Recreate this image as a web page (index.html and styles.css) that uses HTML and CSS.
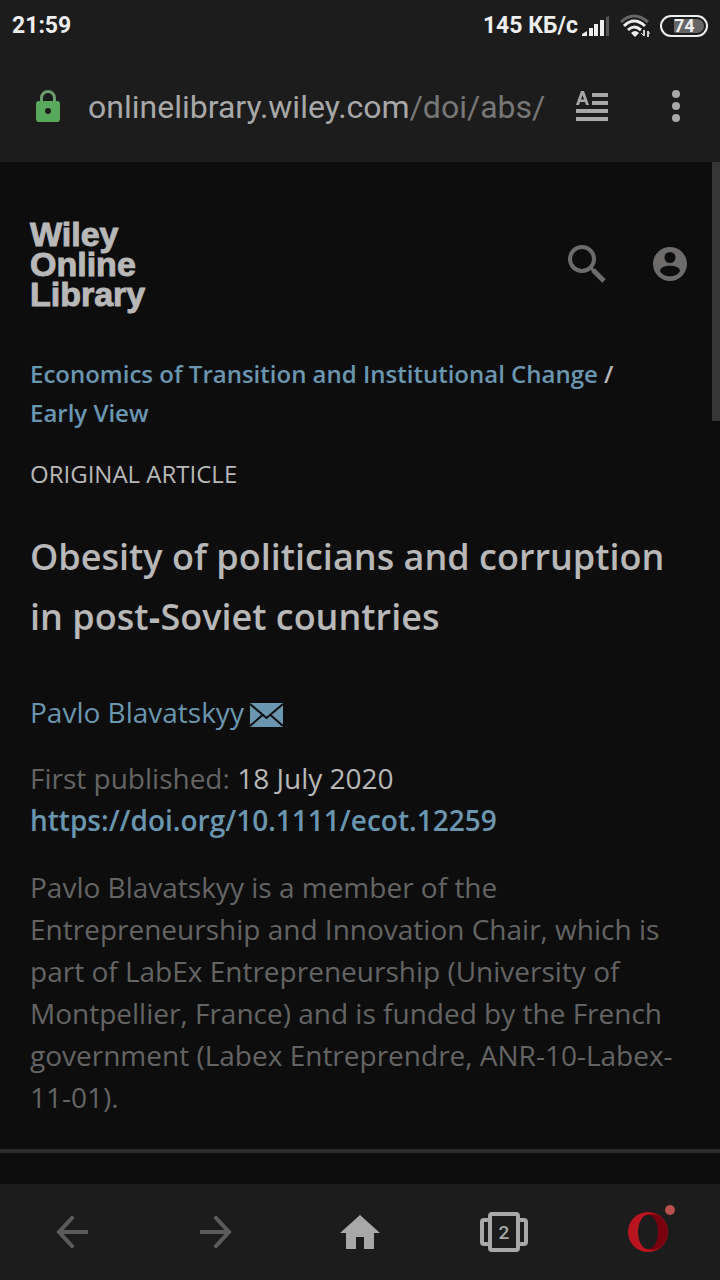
FILE: index.html
```
<!DOCTYPE html>
<html lang="en">
	<head>
		<meta charset="utf-8">
		<meta name="viewport" content="width=device-width, initial-scale=1">
		<title>Obesity of politicians and corruption in post-Soviet countries</title>
		<link rel="stylesheet" href="styles.css">
	</head>
	<body>
		<div class="status">
			<span class="clock">21:59</span>
			<span class="speed">145 КБ/с</span>
			<svg class="signal" width="28" height="20" viewBox="0 0 28 20">
				<path fill="#eee" d="M0 20v-2l5-3v5zM7 12h4v8H7zM12 8h4v12h-4zM18 4h4v16h-4z"/>
				<path fill="#555" d="M24 1l3-1v20h-3z"/>
			</svg>
			<svg class="wifi" width="30" height="24" viewBox="0 0 30 24" fill="none" stroke-width="3">
				<path stroke="#666" d="M1 8Q14 -4 28 8"/>
				<path stroke="#eee" d="M4 12Q14 2 25 12M8 16Q14 10 21 16"/>
				<path fill="#eee" d="M11 19q4-4 8 0l-4 4z"/>
				<path stroke="#ccc" stroke-width="2" d="M24 16v6M28 23v-6"/>
				<path stroke="#ccc" stroke-width="1" d="M21 19l3 3M30 20l-2-3"/>
			</svg>
			<span class="battery"><span class="charge">74</span></span>
		</div>

		<div class="address">
			<svg class="lock" width="24" height="32" viewBox="0 0 24 32">
				<path fill="none" stroke="#6a9e6c" stroke-width="3" d="M5.500 12V8a6.500 6.500 0 0 1 13 0v4"/>
				<rect y="11" width="24" height="21" rx="3" fill="#58a95c"/>
				<circle cx="12" cy="21" r="3" fill="#1c1c1c"/>
			</svg>
			<button class="url">onlinelibrary.wiley.com<span class="path">/doi/abs/</span></button>
			<button class="icon-button" aria-label="Reader mode">
				<svg width="32" height="30" viewBox="0 0 32 30" fill="#a8a8a8">
					<path fill-rule="evenodd" d="M5 0h3l5 14h-3l-1-3H4l-1 3H0zM6.500 4L5 8.500h3z"/>
					<path d="M16 2h16v4H16zM16 10h16v4H16zM0 18h32v4H0zM0 26h32v4H0z"/>
				</svg>
			</button>
			<button class="icon-button" aria-label="Menu">
				<svg width="8" height="32" viewBox="0 0 8 32" fill="#a8a8a8">
					<circle cx="4" cy="4" r="4"/>
					<circle cx="4" cy="16" r="4"/>
					<circle cx="4" cy="28" r="4"/>
				</svg>
			</button>
		</div>

		<main class="page">
			<div class="scrollbar"></div>

			<header class="site">
				<a href="#" class="logo">Wiley<br>Online<br>Library</a>
				<button class="site-button" aria-label="Search">
					<svg width="40" height="40" viewBox="0 0 40 40" fill="none" stroke="#6e6b6b">
						<circle cx="15" cy="15" r="12" stroke-width="4"/>
						<path stroke-width="5" d="M26 26l11 11"/>
						<path stroke-width="3" d="M23 23l4 4"/>
					</svg>
				</button>
				<button class="site-button" aria-label="Account">
					<svg width="34" height="34" viewBox="0 0 34 34">
						<circle cx="17" cy="17" r="17" fill="#6e6b6b"/>
						<circle cx="17" cy="10.500" r="5.500" fill="#0d0d0d"/>
						<path fill="#0d0d0d" d="M7 24c0-7 20-7 20 0-3 7-17 7-20 0z"/>
					</svg>
				</button>
			</header>

			<article class="article">
				<nav class="crumbs">
					<a href="#">Economics of Transition and Institutional Change</a> /
					<a href="#">Early View</a>
				</nav>
				<p class="kind">ORIGINAL ARTICLE</p>
				<h1 class="title">Obesity of politicians and corruption in post‐Soviet countries</h1>
				<p class="author">
					<a href="#">Pavlo Blavatskyy</a>
					<a href="#" class="mail" aria-label="Email the author">
						<svg width="34" height="24" viewBox="0 0 34 24">
							<rect width="33" height="24" fill="#6a96b0"/>
							<path fill="none" stroke="#0d0d0d" stroke-width="2" d="M0 1l16.500 14L33 1M0 23l12.500-11M33 23L20.500 12"/>
						</svg>
					</a>
				</p>
				<p class="published">
					First published: <span class="date">18 July 2020</span><br>
					<a href="#" class="doi">https://doi.org/10.1111/ecot.12259</a>
				</p>
				<p class="bio">Pavlo Blavatskyy is a member of the Entrepreneurship and Innovation Chair, which is part of LabEx Entrepreneurship (University of Montpellier, France) and is funded by the French government (Labex Entreprendre, ANR-10-Labex-11-01).</p>
			</article>
			<hr class="divider">
		</main>

		<nav class="toolbar">
			<button aria-label="Back">
				<svg width="32" height="32" viewBox="0 0 32 32" fill="none" stroke="#5c5c5c" stroke-width="4">
					<path d="M3 16h29"/>
					<path stroke-linecap="round" d="M16 2L3 16l13 14"/>
				</svg>
			</button>
			<button aria-label="Forward">
				<svg width="32" height="32" viewBox="0 0 32 32" fill="none" stroke="#5c5c5c" stroke-width="4">
					<path d="M0 16h29"/>
					<path stroke-linecap="round" d="M16 2l13 14-13 14"/>
				</svg>
			</button>
			<button aria-label="Home">
				<svg width="40" height="34" viewBox="0 0 40 34">
					<path fill="#a8a8a8" d="M20 0l20 18h-6v16H24V22h-8v12H6V18H0z"/>
				</svg>
			</button>
			<button class="tabs" aria-label="2 tabs">
				<svg width="48" height="40" viewBox="0 0 48 40" fill="none" stroke="#a8a8a8" stroke-width="4">
					<rect x="10" y="2" width="28" height="36" rx="2"/>
					<path d="M9 8H4q-2 0-2 2v20q0 2 2 2h5M39 8h5q2 0 2 2v20q0 2-2 2h-5"/>
				</svg>
				<span class="count">2</span>
			</button>
			<button class="opera" aria-label="Opera menu">
				<svg width="40" height="40" viewBox="0 0 40 40">
					<circle cx="20" cy="20" r="20" fill="#b9151f"/>
					<path fill="#78000f" d="M14 6c4-4 12-6 19-1a20 20 0 0 1 0 30c-7 5-15 3-19-1z"/>
					<ellipse cx="20" cy="20" rx="10" ry="17" fill="#1c1c1c"/>
				</svg>
				<span class="dot"></span>
			</button>
		</nav>
	</body>
</html>
```
FILE: styles.css
```
* {
	box-sizing: border-box;
}
body {
	margin: 0;
	min-height: 100vh;
	display: flex;
	flex-direction: column;
	background: #0d0d0d;
	color: #b8b8b8;
	font-family: "Open Sans", sans-serif;
}
a {
	color: #6a96b0;
	text-decoration: none;
}
button {
	padding: 0;
	border: 0;
	background: none;
	color: #a8a8a8;
	font-family: Roboto, sans-serif;
}
svg {
	display: block;
	flex-shrink: 0;
}
p {
	margin: 0;
}

.status {
	display: flex;
	align-items: center;
	height: 52px;
	padding: 0 12px;
	background: #1c1c1c;
	color: #eee;
	font: bold 23px/28px Roboto, sans-serif;
}
.clock {
	flex: 1;
}
.signal {
	margin-left: 4px;
}
.wifi {
	margin: 0 10px;
}
.battery {
	display: flex;
	justify-content: flex-end;
	width: 48px;
	height: 22px;
	padding: 2px;
	border: 2px solid #eee;
	border-radius: 11px;
}
.charge {
	width: 30px;
	border-radius: 2px 8px 8px 2px;
	background: #666;
	font-size: 18px;
	line-height: 14px;
}

.address {
	display: flex;
	align-items: center;
	height: 110px;
	padding: 0 40px 2px 36px;
	background: #1c1c1c;
}
.url {
	flex: 1;
	min-width: 0;
	padding: 2px 0 0 28px;
	font-size: 32px;
	line-height: 40px;
	text-align: left;
	white-space: nowrap;
}
.path {
	color: #777;
}
.icon-button {
	margin-left: 32px;
}
.icon-button + .icon-button {
	margin-left: 64px;
}

.page {
	position: relative;
	flex: 1;
}
.scrollbar {
	position: absolute;
	top: 0;
	right: 0;
	width: 8px;
	height: 259px;
	background: #363636;
}
.site {
	display: flex;
	align-items: center;
	padding: 57px 33px 35px 30px;
}
.logo {
	flex: 1;
	color: #b8b8b8;
	font: bold 34px/30px "Liberation Sans", sans-serif;
	-webkit-text-stroke: 1px #b8b8b8;
}
.site-button {
	margin-left: 46px;
}
.article {
	padding: 10px 30px 31px;
	font-size: 28px;
	line-height: 42px;
}
.crumbs {
	font-size: 24px;
	font-weight: 600;
	line-height: 39px;
}
.crumbs a {
	display: inline-block;
}
.kind {
	margin-top: 22px;
	font-size: 24px;
	line-height: 39px;
}
.title {
	margin: 34px 0 44px;
	font-size: 36px;
	font-weight: 600;
	line-height: 60px;
}
.author {
	display: flex;
	align-items: center;
	gap: 6px;
}
.mail {
	padding-top: 6px;
}
.published {
	margin: 24px 0 25px;
	color: #646464;
}
.date {
	color: #b8b8b8;
}
.doi {
	font-weight: 600;
}
.bio {
	color: #646464;
}
.divider {
	height: 4px;
	margin: 0 0 31px;
	border: 0;
	background: #2c2c2c;
}

.toolbar {
	display: grid;
	grid-template-columns: repeat(5, 1fr);
	height: 96px;
	background: #1c1c1c;
}
.toolbar button {
	display: grid;
	place-items: center;
}
.tabs svg,
.tabs .count,
.opera svg,
.opera .dot {
	grid-area: 1 / 1;
}
.count {
	font-size: 19px;
	font-weight: 500;
}
.dot {
	width: 10px;
	height: 10px;
	margin: 0 0 44px 44px;
	border-radius: 50%;
	background: #b8504e;
}
```
